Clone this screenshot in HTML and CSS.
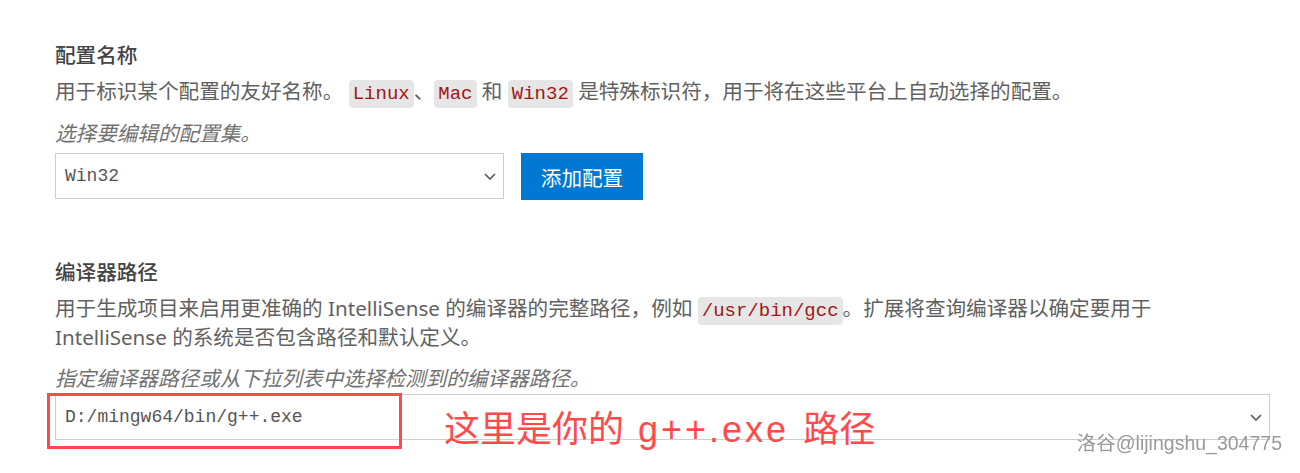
FILE: index.html
```html
<!DOCTYPE html>
<html lang="zh-CN">
<head>
    <meta charset="UTF-8">
    <meta name="viewport" content="width=device-width, initial-scale=1.0">
    <title>C/C++ 配置</title>
<link rel="stylesheet" href="styles.css">
</head>
<body>
    <div class="settings">
        <section class="setting">
            <div class="setting-title">配置名称</div>
            <div class="setting-desc">用于标识某个配置的友好名称。 <code>Linux</code>、<code>Mac</code> 和 <code>Win32</code> 是特殊标识符，用于将在这些平台上自动选择的配置。</div>
            <div class="setting-hint">选择要编辑的配置集。</div>
            <div class="config-row">
                <div class="select select-narrow">
                    <span>Win32</span>
                    <svg class="chevron" width="12" height="7" viewBox="0 0 12 7"><path d="M1 1l5 5 5-5"/></svg>
                </div>
                <button type="button" class="btn">添加配置</button>
            </div>
        </section>

        <section class="setting">
            <div class="setting-title">编译器路径</div>
            <div class="setting-desc">用于生成项目来启用更准确的 IntelliSense 的编译器的完整路径，例如 <code>/usr/bin/gcc</code>。扩展将查询编译器以确定要用于 IntelliSense 的系统是否包含路径和默认定义。</div>
            <div class="setting-hint hint-tight">指定编译器路径或从下拉列表中选择检测到的编译器路径。</div>
            <div class="compiler-field">
                <div class="select">
                    <span>D:/mingw64/bin/g++.exe</span>
                    <svg class="chevron" width="12" height="7" viewBox="0 0 12 7"><path d="M1 1l5 5 5-5"/></svg>
                </div>
                <!-- 标注 -->
                <div class="mark-box"></div>
                <div class="mark-text">这里是你的 <span class="mark-file">g++.exe</span> 路径</div>
            </div>
        </section>
    </div>

    <div class="watermark">洛谷@lijingshu_304775</div>
</body>
</html>
```

FILE: styles.css
```css
body {
    margin: 0;
    background-color: #ffffff;
    font-family: "Noto Sans", "Noto Sans CJK SC", sans-serif;
    font-size: 20.6px;
    color: #616161;
}
.settings {
    padding: 41px 30px 33px 55px;
}
.setting + .setting {
    margin-top: 58px;
}
.setting-title {
    font-weight: 500;
    color: #444444;
    line-height: 29px;
}
.setting-desc {
    max-width: 1180px;
    line-height: 29px;
    margin-top: 7px;
}
.setting-desc code {
    font-family: "Liberation Mono", monospace;
    font-size: 19px;
    line-height: 1;
    color: #a31515;
    background-color: #e6e6e6;
    border-radius: 4px;
    padding: 3px 4px;
}
.setting-hint {
    font-style: italic;
    color: #717171;
    line-height: 29px;
    margin-top: 13px;
}
.hint-tight {
    margin-top: 12px;
}
.config-row {
    display: flex;
    gap: 17px;
    margin-top: 5px;
}
.select {
    box-sizing: border-box;
    height: 46px;
    border: 1px solid #cecece;
    background-color: #ffffff;
    display: flex;
    align-items: center;
    justify-content: space-between;
    padding: 0 7px 0 9px;
    font-family: "Liberation Mono", monospace;
    font-size: 18px;
    color: #555555;
}
.select-narrow {
    width: 449px;
}
.chevron path {
    fill: none;
    stroke: #555555;
    stroke-width: 1.6;
}
.btn {
    width: 122px;
    height: 47px;
    border: none;
    background-color: #0078d4;
    color: #ffffff;
    font-family: inherit;
    font-size: 20.6px;
    cursor: pointer;
}
.compiler-field {
    position: relative;
    margin-top: 1px;
}
.mark-box {
    position: absolute;
    left: -8px;
    top: -1px;
    width: 355px;
    height: 56px;
    box-sizing: border-box;
    border: 3px solid #ff4a4a;
}
.mark-text {
    position: absolute;
    left: 389px;
    top: 17px;
    font-family: "Liberation Sans", "Noto Sans CJK SC", sans-serif;
    font-size: 36px;
    line-height: 38px;
    color: #ff4a4a;
    white-space: nowrap;
    word-spacing: 4px;
}
.mark-file {
    letter-spacing: 3px;
}
.watermark {
    position: fixed;
    right: 18px;
    bottom: 18px;
    font-family: "Liberation Sans", "Noto Sans CJK SC", sans-serif;
    font-size: 19.5px;
    line-height: 24px;
    color: #9a9a9a;
}
```
